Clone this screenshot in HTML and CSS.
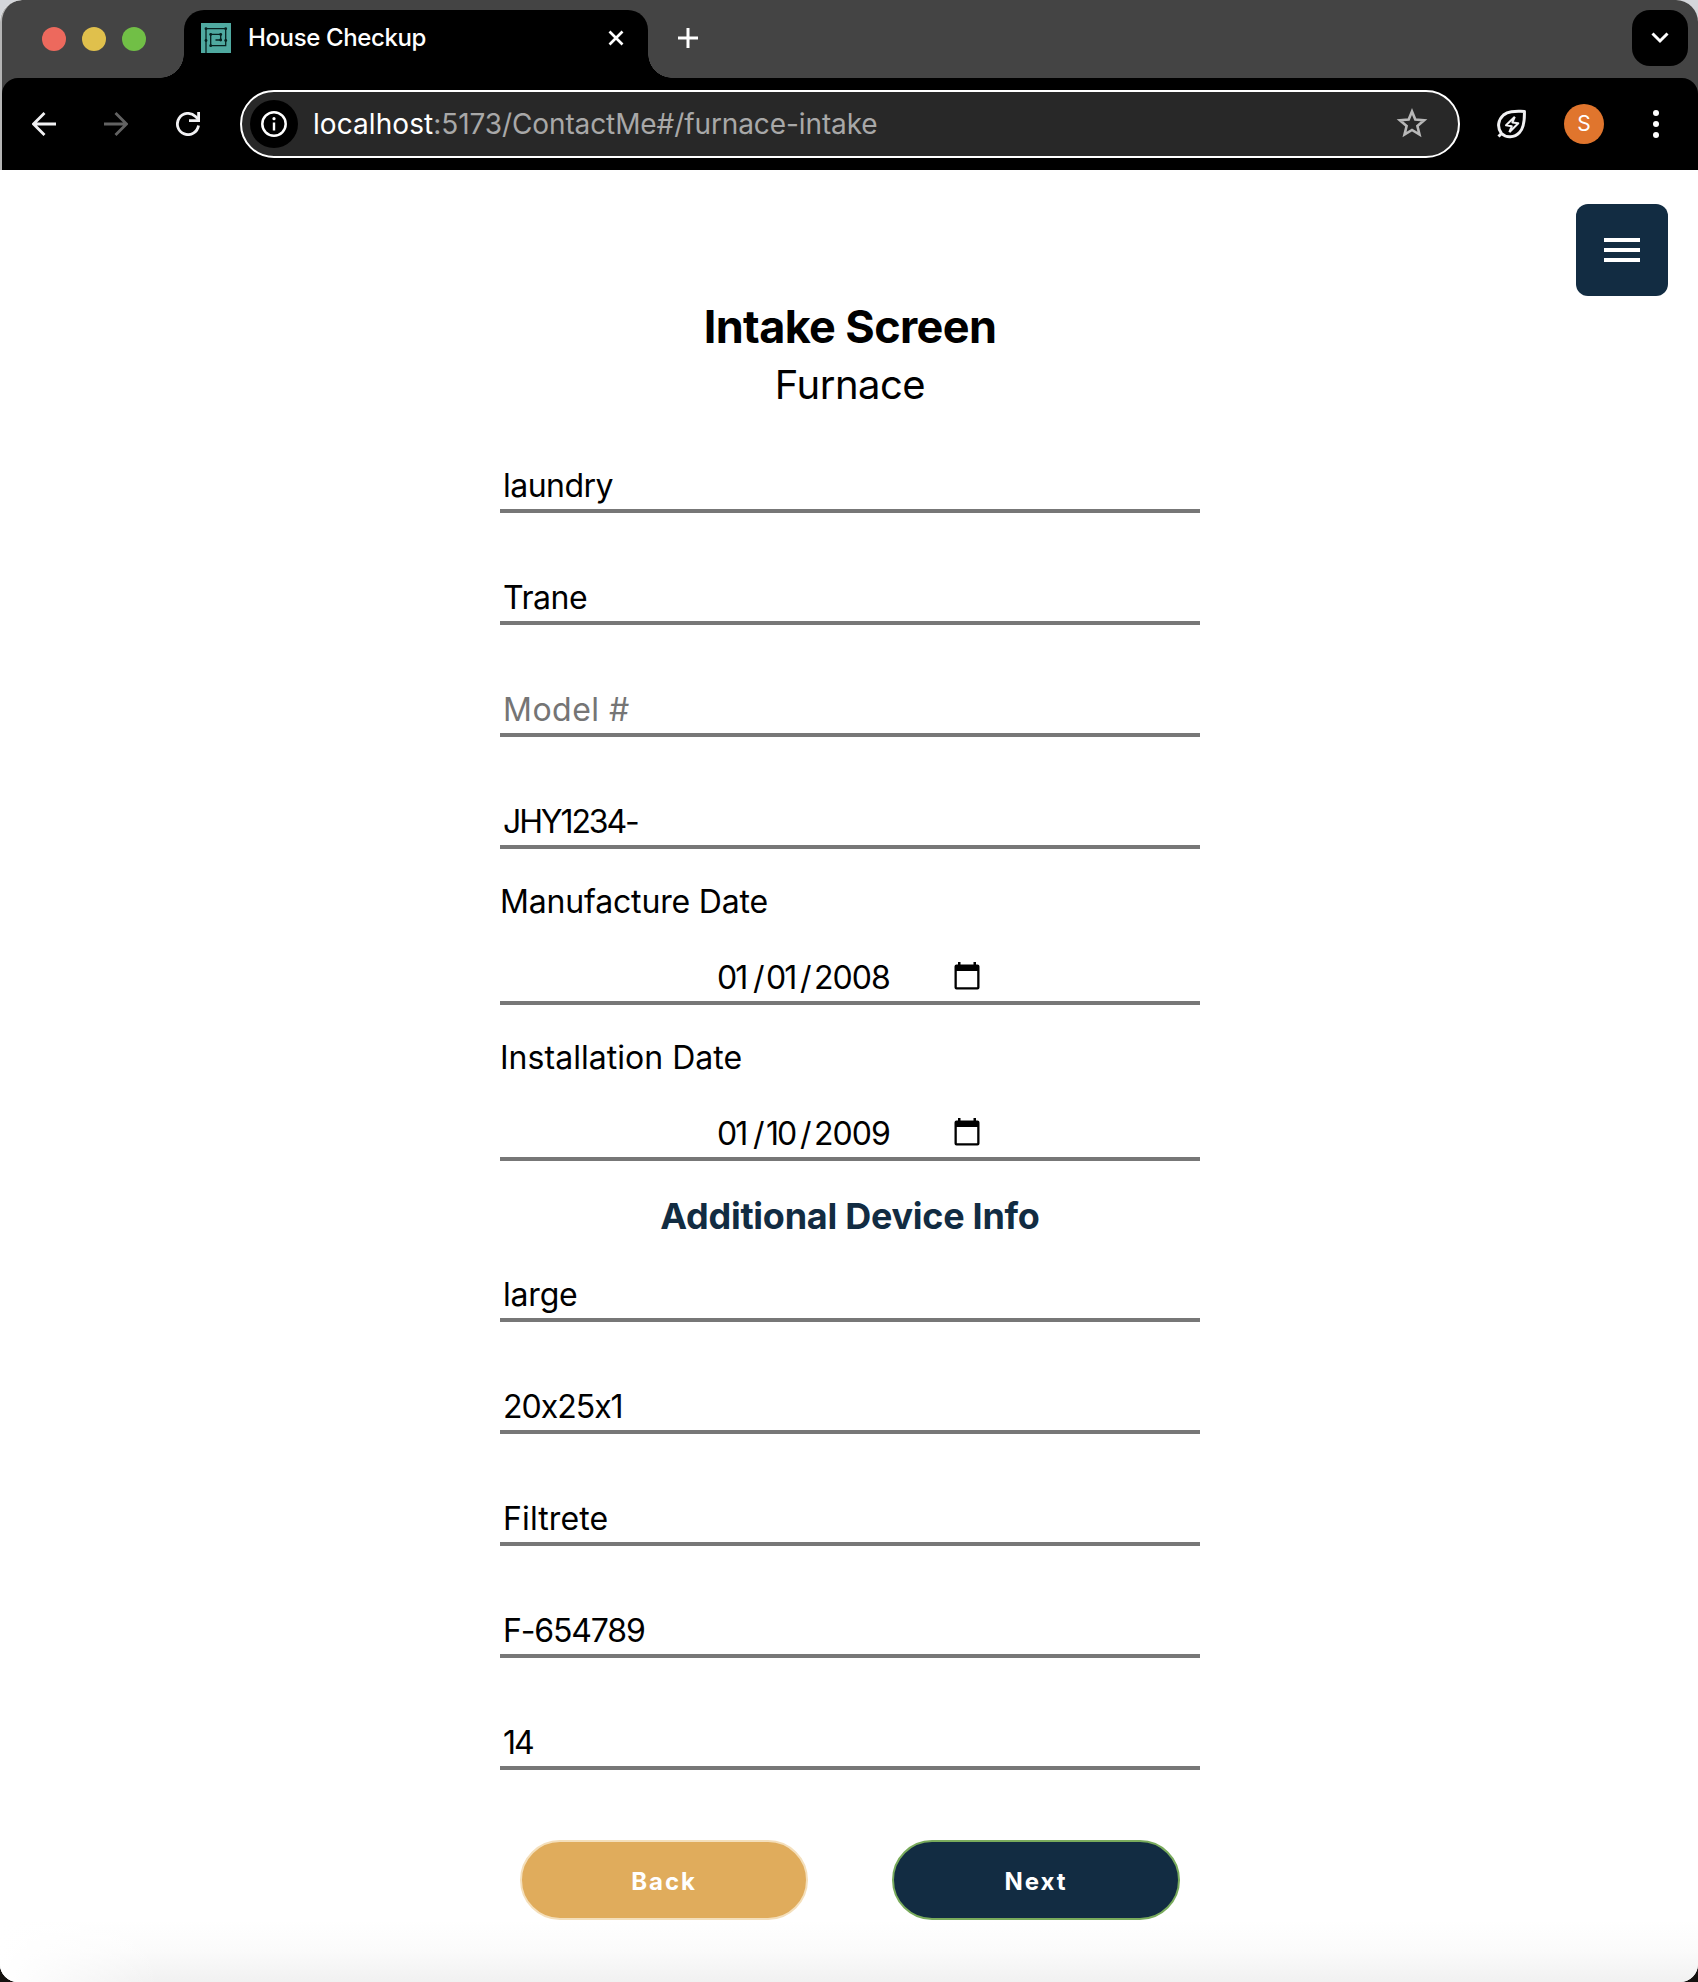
FILE: index.html
```html
<!DOCTYPE html>
<html lang="en">
<head>
<meta charset="utf-8">
<title>House Checkup</title>
<link rel="stylesheet" href="styles.css">
</head>
<body>
<div class="window">
  <header class="chrome">
    <div class="tabstrip">
      <div class="lights"><i class="light red"></i><i class="light yellow"></i><i class="light green"></i></div>
      <div class="tab">
        <svg class="favicon" width="30" height="30" viewBox="0 0 30 30">
          <rect width="30" height="30" fill="#4fa9a0"/>
          <path d="M5 30V5.700H24.700V22.700H9.700V11.400H19.700V17H14.500" fill="none" stroke="#06201e" stroke-width="1.300"/>
          <g fill="#06201e"><circle cx="5" cy="5.700" r="1.400"/><circle cx="24.700" cy="5.700" r="1.400"/><circle cx="5" cy="17.500" r="1.400"/><circle cx="24.700" cy="17.500" r="1.400"/><circle cx="9.700" cy="11.400" r="1.400"/><circle cx="19.700" cy="11.400" r="1.400"/><circle cx="9.700" cy="22.700" r="1.400"/><circle cx="19.700" cy="17" r="1.400"/></g>
        </svg>
        <span class="tab-title">House Checkup</span>
        <svg class="close" width="16" height="16" viewBox="0 0 16 16"><path d="M1.500 1.500 14.500 14.500M14.500 1.500 1.500 14.500" stroke="#fff" stroke-width="2.700"/></svg>
      </div>
      <svg class="new-tab" width="20" height="20" viewBox="0 0 20 20"><path d="M10 0V20M0 10H20" stroke="#fff" stroke-width="3"/></svg>
      <div class="tab-search"><svg width="18" height="12" viewBox="0 0 18 12"><path d="M1.500 1.500 9 9 16.500 1.500" fill="none" stroke="#fff" stroke-width="3"/></svg></div>
    </div>
    <div class="toolbar">
      <svg class="back-icon" width="24" height="24" viewBox="0 0 24 24"><path d="M24 12H2M12.500 1 1.500 12 12.500 23" fill="none" stroke="#f1f1f3" stroke-width="2.800"/></svg>
      <svg class="forward-icon" width="24" height="24" viewBox="0 0 24 24"><path d="M0 12H22M11.500 1 22.500 12 11.500 23" fill="none" stroke="#626262" stroke-width="2.800"/></svg>
      <svg class="reload-icon" width="24" height="24" viewBox="0 0 24 24"><path d="M22.500 13.500A10.600 10.600 0 1 1 19.500 4.500L22 7" fill="none" stroke="#f1f1f3" stroke-width="2.800"/><path d="M21.200 0H24V10H13V7.200H21.200Z" fill="#f1f1f3"/></svg>
      <div class="omnibox">
        <span class="site-info"><svg width="26" height="26" viewBox="0 0 26 26"><circle cx="13" cy="13" r="11.700" fill="none" stroke="#fff" stroke-width="2.500"/><path d="M13 11.500V19.500" stroke="#fff" stroke-width="2.400"/><circle cx="13" cy="7.700" r="1.600" fill="#fff"/></svg></span>
        <span class="url"><span class="host">localhost</span><span class="path">:5173/ContactMe#/furnace-intake</span></span>
        <svg class="star" width="32" height="32" viewBox="0 0 32 32"><path d="M16 3.500 19.300 11.600 28.100 12.300 21.400 18 23.500 26.600 16 22 8.500 26.600 10.600 18 3.900 12.300 12.700 11.600Z" fill="none" stroke="#b8b8b8" stroke-width="2.600"/></svg>
      </div>
      <svg class="saver" width="32" height="32" viewBox="0 0 32 32"><path d="M5.500 25.500C.5 19 2.500 11.500 7.500 7 13 2.500 20 3.400 28.400 3.400 28.600 11 28.500 19.500 23.500 24.500 18.500 30 10 30 5.500 25.500L2.500 28.500" fill="none" stroke="#f1f1f3" stroke-width="3" stroke-linejoin="round"/><path d="M18.800 8.800 10 17.200 15.800 18.200 13.300 24.200M13.300 24.200 22.300 15.300 16.400 14.400 18.800 8.800" fill="none" stroke="#f1f1f3" stroke-width="2" stroke-linejoin="round"/></svg>
      <span class="avatar">S</span>
      <svg class="more" width="6" height="28" viewBox="0 0 6 28"><g fill="#fff"><circle cx="3" cy="3" r="3"/><circle cx="3" cy="14" r="3"/><circle cx="3" cy="25" r="3"/></g></svg>
    </div>
  </header>
  <main class="page">
    <button class="menu" aria-label="Menu"><i></i><i></i><i></i></button>
    <h1 class="title">Intake Screen</h1>
    <p class="subtitle">Furnace</p>
    <div class="form">
      <div class="group">
        <div class="field room">laundry</div>
        <div class="field brand">Trane</div>
        <div class="field model">Model #</div>
        <div class="field serial">JHY1234-</div>
      </div>
      <div class="label made">Manufacture Date</div>
      <div class="field date"><span>01</span><span>/</span><span>01</span><span>/</span><span class="year">2008</span>
        <svg class="calendar" width="26" height="28" viewBox="0 0 26 28"><path d="M4 0H6.500V2.500H19.500V0H22V2.500H23.500Q25.500 2.500 25.500 4.500V25.500Q25.500 27.500 23.500 27.500H2.500Q.5 27.500.5 25.500V4.500Q.5 2.500 2.500 2.500H4ZM2.800 9V25.200H23.200V9Z" fill-rule="evenodd"/></svg></div>
      <div class="label installed">Installation Date</div>
      <div class="field date"><span>01</span><span>/</span><span>10</span><span>/</span><span class="year">2009</span>
        <svg class="calendar" width="26" height="28" viewBox="0 0 26 28"><path d="M4 0H6.500V2.500H19.500V0H22V2.500H23.500Q25.500 2.500 25.500 4.500V25.500Q25.500 27.500 23.500 27.500H2.500Q.5 27.500.5 25.500V4.500Q.5 2.500 2.500 2.500H4ZM2.800 9V25.200H23.200V9Z" fill-rule="evenodd"/></svg></div>
      <h2 class="section">Additional Device Info</h2>
      <div class="group">
        <div class="field size">large</div>
        <div class="field filter">20x25x1</div>
        <div class="field maker">Filtrete</div>
        <div class="field part">F-654789</div>
        <div class="field count">14</div>
      </div>
      <div class="actions"><button class="btn back">Back</button><button class="btn next">Next</button></div>
    </div>
  </main>
</div>
</body>
</html>
```
FILE: styles.css
```css
* { box-sizing: border-box; }
body { margin: 0; background: linear-gradient(#d4d6da 50%, #14110f 50%); font-family: Inter, "Liberation Sans", sans-serif; font-feature-settings: "calt" 0; }
svg { display: block; flex: none; }
button { font-family: inherit; padding: 0; cursor: pointer; }

.window { height: 1982px; overflow: hidden; border-radius: 22px 22px 18px 18px; background: #fff; }

/* Browser frame */
.chrome { border-left: 2px solid #b5b5b5; border-radius: 22px 0 0 0; background: #444; overflow: hidden; }
.tabstrip { display: flex; align-items: flex-start; height: 78px; }
.lights { display: flex; gap: 16px; padding: 27px 0 0 40px; width: 182px; }
.light { width: 24px; height: 24px; border-radius: 50%; }
.red { background: #ed695d; }
.yellow { background: #e0c04c; }
.green { background: #71bf46; }
.tab { position: relative; display: flex; align-items: center; width: 464px; height: 68px; margin-top: 10px; padding: 0 24px 12px 17px; border-radius: 20px 20px 0 0; background: #000; }
.tab::before, .tab::after { content: ""; position: absolute; bottom: 0; width: 24px; height: 24px; }
.tab::before { right: 100%; background: radial-gradient(circle at 0 0, transparent 23.5px, #000 24px); }
.tab::after { left: 100%; background: radial-gradient(circle at 100% 0, transparent 23.5px, #000 24px); }
.tab-title { margin-left: 17px; color: #fff; font-size: 24px; font-weight: 500; line-height: 32px; letter-spacing: -0.38px; white-space: nowrap; }
.close { margin-left: auto; }
.new-tab { margin: 28px 0 0 30px; }
.tab-search { display: flex; align-items: center; justify-content: center; width: 56px; height: 56px; margin: 10px 10px 0 auto; border-radius: 18px; background: #000; }
.toolbar { display: flex; align-items: center; height: 92px; padding: 0 39px 0 30px; border-radius: 16px 16px 0 0; background: #000; }
.forward-icon { margin-left: 48px; }
.reload-icon { margin-left: 48px; }
.omnibox { display: flex; align-items: center; width: 1220px; height: 68px; margin-left: 40px; padding: 0 30px 0 8px; border: 2px solid #fff; border-radius: 34px; background: #282828; }
.site-info { display: flex; align-items: center; justify-content: center; width: 48px; height: 48px; border-radius: 50%; background: #000; }
.url { margin-left: 15px; font-size: 28px; line-height: 36px; color: #a8a8a8; white-space: nowrap; }
.host { color: #fff; letter-spacing: 0.07px; }
.path { letter-spacing: -0.1px; }
.star { margin-left: auto; }
.saver { margin-left: 36px; }
.avatar { width: 40px; height: 40px; margin-left: 36px; border-radius: 50%; background: #e0752d; color: #fff; font-size: 21px; line-height: 40px; text-align: center; }
.more { margin-left: auto; }

/* Page */
.page { position: relative; height: 1812px; padding: 129px 0 0 2px; background: linear-gradient(90deg, #fff, transparent 160px), linear-gradient(#fff 1750px, #fbfbfb 1780px, #f1f1f1); color: #000; }
.menu { position: absolute; top: 34px; right: 30px; display: flex; flex-direction: column; align-items: center; justify-content: center; gap: 6px; width: 92px; height: 92px; border: 0; border-radius: 12px; background: #122c42; }
.menu i { width: 36px; height: 4px; background: #fff; }
.title { margin: 0; font-size: 45px; line-height: 56px; font-weight: 700; letter-spacing: -0.63px; text-align: center; }
.subtitle { margin: 6px 0 56px; font-size: 40px; line-height: 48px; letter-spacing: -0.51px; text-align: center; }
.form { width: 700px; margin: 0 auto; font-size: 32px; line-height: 40px; }
.group { display: flex; flex-direction: column; gap: 64px; }
.field { height: 48px; padding: 1px 3px 0; border-bottom: 4px solid #777; white-space: nowrap; }
.room { letter-spacing: -0.53px; }
.brand { letter-spacing: -0.44px; }
.model { color: #757575; letter-spacing: 0.48px; }
.serial { letter-spacing: -2.1px; }
.size { letter-spacing: -0.2px; }
.filter { letter-spacing: -1px; }
.maker { letter-spacing: 0.12px; }
.part { letter-spacing: -1.15px; }
.count { letter-spacing: -2px; }
.label { margin: 33px 0 35px; }
.made { letter-spacing: -0.17px; }
.installed { letter-spacing: 0.03px; }
.date { display: grid; grid-template-columns: 36px 13px 34px 14px 140px 26px; padding-left: 217px; letter-spacing: -2px; }
.year { letter-spacing: -0.96px; }
.calendar { margin-top: 4px; }
.section { margin: 33px 0 36px; color: #122c42; font-size: 36px; line-height: 44px; font-weight: 700; letter-spacing: -0.27px; text-align: center; }
.actions { display: flex; justify-content: center; gap: 84px; margin-top: 70px; }
.btn { width: 288px; height: 80px; padding-top: 2px; border: 2px solid; border-radius: 40px; color: #fff; font-size: 24px; font-weight: 700; letter-spacing: 1.95px; }
.back { border-color: #f4dfbb; background: #e0ac5c; }
.next { border-color: #79ab5c; background: #122c42; }
```
